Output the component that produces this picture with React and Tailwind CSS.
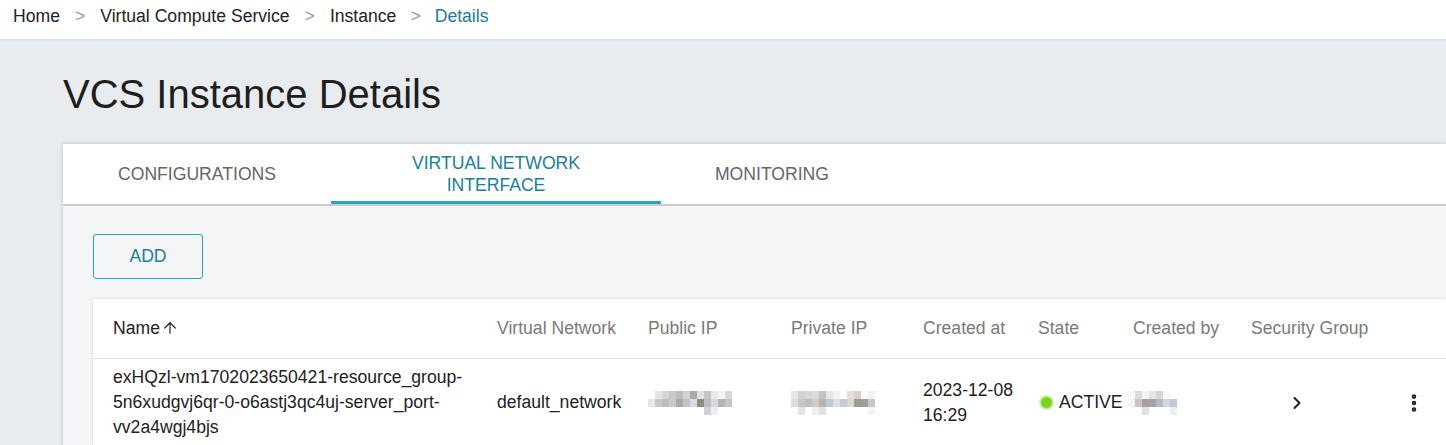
import { ChevronRight, EllipsisVertical, ArrowUp } from "lucide-react";

const font = { fontFamily: '"Liberation Sans", Arial, sans-serif' };

// pixelated placeholder for masked values
const palettes = {
  pub: [
    ["#fff", "#e4e4e4", "#d6d6d6", "#c9c9c9", "#b9bbbd", "#d0d2d3", "#a6a8a9", "#e0e0e0", "#c4c4c4", "#eaeaea", "#f4f4f4", "#d6d6d6"],
    ["#e6e6e6", "#c8c8c8", "#bdbdbd", "#c9cbc4", "#a8aaa8", "#bfc5c8", "#d6dde3", "#8e8a87", "#bcbdc0", "#d8d8d8", "#b4b4b4", "#c6c6c6"],
    ["#fff", "#fff", "#fff", "#fff", "#fff", "#fff", "#fff", "#fff", "#d2d2d6", "#eeeeee", "#fff", "#fff"],
  ],
  priv: [
    ["#e8e8e8", "#d2d2d2", "#d7d7d7", "#e1d8d4", "#c4c4c4", "#e6e6e6", "#f2f2f2", "#fff", "#e2ddd8", "#d6d1cc", "#fff", "#eef2f6"],
    ["#dcdcdc", "#c6c6c6", "#bcc0c6", "#d6c8c6", "#b2b6b4", "#c3c9cd", "#dce0ea", "#c7cdd8", "#d8d8d8", "#a09a96", "#9d9f9a", "#c8c8c8"],
    ["#fff", "#e4e4e4", "#fff", "#f0f0f0", "#e2e2e2", "#fff", "#fff", "#fff", "#fff", "#fff", "#fff", "#f8f4ee"],
  ],
  by: [
    ["#fbf8f4", "#dcdcdc", "#f4f4f4", "#e6e6e6", "#d8d4d2", "#f6f8fb", "#fff", "#fff"],
    ["#f8f4ee", "#c4c6c8", "#ad9f98", "#9ca6ad", "#b8bbb8", "#d3d6da", "#c2c7d4", "#fff"],
    ["#fff", "#fff", "#e2e2e2", "#fff", "#fff", "#fff", "#eef0f3", "#fff"],
  ],
};

function Masked({ kind }) {
  return (
    <div className="flex flex-col">
      {palettes[kind].map((row, i) => (
        <div key={i} className="flex">
          {row.map((c, j) => (
            <span key={j} className="block w-[7px] h-[8px]" style={{ background: c }} />
          ))}
        </div>
      ))}
    </div>
  );
}

const cols =
  "grid grid-cols-[384px_151px_143px_132px_115px_95px_118px_162px_1fr]";

function App() {
  return (
    <div className="w-[1446px] h-[445px] overflow-hidden bg-[#e9ecef] text-[17.6px]" style={font}>
      {/* Breadcrumb */}
      <div className="h-[39px] bg-white flex items-start pt-[3px] pl-[13px] text-[#222] shadow-[0_1px_2px_rgba(0,0,0,0.06)]">
        <span>Home</span>
        <span className="mx-[15px] text-[#9a9a9a]">&gt;</span>
        <span>Virtual Compute Service</span>
        <span className="mx-[15px] text-[#9a9a9a]">&gt;</span>
        <span>Instance</span>
        <span className="mx-[14px] text-[#9a9a9a]">&gt;</span>
        <span className="text-[#1a7c9c]">Details</span>
      </div>

      <div className="pl-[63px] pt-[31px]">
        <h1 className="text-[40px] leading-[48px] text-[#1e1e1e] mb-[26px]">VCS Instance Details</h1>

        {/* Card */}
        <div className="bg-white shadow-[0_0_4px_rgba(0,0,0,0.18)]">
          {/* Tabs */}
          <div className="flex h-[62px] border-b-2 border-[#c9cbce]">
            <div className="w-[268px] flex items-center justify-center text-[#666]">CONFIGURATIONS</div>
            <div className="w-[330px] flex items-center justify-center text-center leading-[22px] text-[#17809c] border-b-[3px] border-[#2ba5bf] pt-[3px]">
              VIRTUAL NETWORK
              <br />
              INTERFACE
            </div>
            <div className="w-[222px] flex items-center justify-center text-[#666]">MONITORING</div>
          </div>

          {/* Content */}
          <div className="bg-[#f4f5f7] pl-[30px] pt-[28px] h-[300px]">
            <button className="w-[110px] h-[45px] border border-[#2aa3bd] rounded-[3px] text-[#17809c]">
              ADD
            </button>

            <div className="mt-[20px] bg-white shadow-[0_0_3px_rgba(0,0,0,0.15)]">
              <div className={`${cols} h-[60px] items-center border-b border-[#e0e0e0] text-[#7a7a7a]`}>
                <div className="pl-5 text-[#222] flex items-center gap-[1px]">
                  Name <ArrowUp size={18} strokeWidth={1.6} className="text-[#222]" />
                </div>
                <div className="pl-5">Virtual Network</div>
                <div className="pl-5">Public IP</div>
                <div className="pl-5">Private IP</div>
                <div className="pl-5">Created at</div>
                <div className="pl-5">State</div>
                <div className="pl-5">Created by</div>
                <div className="pl-[20px] whitespace-nowrap">Security Group</div>
                <div />
              </div>

              <div className={`${cols} items-center pt-[6px] pb-[6px] leading-[25px] text-[#222]`}>
                <div className="pl-5 pr-[8px] break-words">
                  exHQzl-vm1702023650421-resource_group-5n6xudgvj6qr-0-o6astj3qc4uj-server_port-vv2a4wgj4bjs
                </div>
                <div className="pl-5">default_network</div>
                <div className="pl-5">
                  <Masked kind="pub" />
                </div>
                <div className="pl-5">
                  <Masked kind="priv" />
                </div>
                <div className="pl-5">2023-12-08 16:29</div>
                <div className="pl-5 flex items-center whitespace-nowrap">
                  <span className="shrink-0 w-[11px] h-[11px] rounded-full bg-[#7ed321] ring-2 ring-[#c9f0a8] mr-[7px] ml-[3px]" />
                  ACTIVE
                </div>
                <div className="pl-[15px]">
                  <Masked kind="by" />
                </div>
                <div className="pl-[56px] flex items-center">
                  <ChevronRight size={20} strokeWidth={2.5} className="text-[#222]" />
                </div>
                <div className="pl-[10px] flex items-center">
                  <EllipsisVertical size={22} strokeWidth={3} className="text-[#222]" />
                </div>
              </div>
            </div>
          </div>
        </div>
      </div>
    </div>
  );
}

export default App;
